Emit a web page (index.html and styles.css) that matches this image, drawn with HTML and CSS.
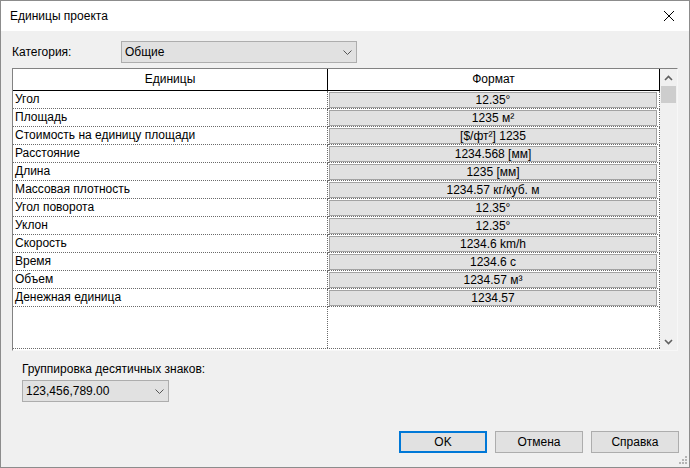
FILE: index.html
```html
<!DOCTYPE html>
<html lang="ru">
<head>
<meta charset="utf-8">
<title>Единицы проекта</title>
<link rel="stylesheet" href="styles.css">
</head>
<body>
<div class="window">
  <div class="titlebar">
    <span class="title">Единицы проекта</span>
    <svg class="close" width="12" height="12" viewBox="0 0 12 12"><path d="M1 1 L11 11 M11 1 L1 11" stroke="#000" stroke-width="1" fill="none"/></svg>
  </div>
  <div class="body">
    <div class="cat-row">
      <span class="cat-label">Категория:</span>
      <div class="combo combo-cat">
        <span>Общие</span>
        <svg class="chev" width="9" height="5" viewBox="0 0 9 5"><path d="M0.5 0.5 L4.5 4.5 L8.5 0.5" stroke="#555" stroke-width="1" fill="none"/></svg>
      </div>
    </div>

    <div class="table">
      <div class="grid">
        <div class="th th1">Единицы</div>
        <div class="th th2">Формат</div>

        <div class="td name">Угол</div>
        <div class="td fmt"><div class="fbtn">12.35°</div></div>

        <div class="td name">Площадь</div>
        <div class="td fmt"><div class="fbtn">1235 м²</div></div>

        <div class="td name">Стоимость на единицу площади</div>
        <div class="td fmt"><div class="fbtn">[$/фт²] 1235</div></div>

        <div class="td name">Расстояние</div>
        <div class="td fmt"><div class="fbtn">1234.568 [мм]</div></div>

        <div class="td name">Длина</div>
        <div class="td fmt"><div class="fbtn">1235 [мм]</div></div>

        <div class="td name">Массовая плотность</div>
        <div class="td fmt"><div class="fbtn">1234.57 кг/куб. м</div></div>

        <div class="td name">Угол поворота</div>
        <div class="td fmt"><div class="fbtn">12.35°</div></div>

        <div class="td name">Уклон</div>
        <div class="td fmt"><div class="fbtn">12.35°</div></div>

        <div class="td name">Скорость</div>
        <div class="td fmt"><div class="fbtn">1234.6 km/h</div></div>

        <div class="td name">Время</div>
        <div class="td fmt"><div class="fbtn">1234.6 с</div></div>

        <div class="td name">Объем</div>
        <div class="td fmt"><div class="fbtn">1234.57 м³</div></div>

        <div class="td name">Денежная единица</div>
        <div class="td fmt"><div class="fbtn">1234.57</div></div>

        <div class="filler f1"></div>
        <div class="filler f2"></div>
      </div>
      <div class="scrollbar">
        <div class="sb-arrow"><svg width="9" height="6" viewBox="0 0 9 6"><path d="M1 5 L4.5 1.5 L8 5" stroke="#606060" stroke-width="1.6" fill="none"/></svg></div>
        <div class="thumb"></div>
        <div class="sb-space"></div>
        <div class="sb-arrow"><svg width="9" height="6" viewBox="0 0 9 6"><path d="M1 1 L4.5 4.5 L8 1" stroke="#606060" stroke-width="1.6" fill="none"/></svg></div>
      </div>
    </div>

    <div class="group">
      <div class="group-label">Группировка десятичных знаков:</div>
      <div class="combo combo-grp">
        <span>123,456,789.00</span>
        <svg class="chev" width="9" height="5" viewBox="0 0 9 5"><path d="M0.5 0.5 L4.5 4.5 L8.5 0.5" stroke="#555" stroke-width="1" fill="none"/></svg>
      </div>
    </div>

    <div class="buttons">
      <div class="btn btn-default">OK</div>
      <div class="btn">Отмена</div>
      <div class="btn">Справка</div>
    </div>
  </div>
  <svg class="grip" width="9" height="9" viewBox="0 0 9 9">
    <rect x="6" y="0" width="2" height="2" fill="#b4b4b4"/>
    <rect x="3" y="3" width="2" height="2" fill="#b4b4b4"/>
    <rect x="6" y="3" width="2" height="2" fill="#b4b4b4"/>
    <rect x="0" y="6" width="2" height="2" fill="#b4b4b4"/>
    <rect x="3" y="6" width="2" height="2" fill="#b4b4b4"/>
    <rect x="6" y="6" width="2" height="2" fill="#b4b4b4"/>
  </svg>
</div>
</body>
</html>
```

FILE: styles.css
```css
* { box-sizing: border-box; }

html, body {
  margin: 0;
  padding: 0;
  background: #f0f0f0;
}

body {
  font-family: "Liberation Sans", Arial, sans-serif;
  font-size: 12px;
  color: #000;
}

.window {
  position: relative;
  width: 690px;
  height: 468px;
  border: 1px solid #8c8c8c;
  background: #f0f0f0;
  display: flex;
  flex-direction: column;
}

.titlebar {
  height: 30px;
  background: #fff;
  display: flex;
  align-items: center;
  justify-content: space-between;
  padding: 0 9px 0 9px;
}

.title {
  font-size: 12px;
  line-height: 15px;
}

.close {
  display: block;
  margin-right: 5px;
}

.body {
  padding: 0 10px 0 11px;
  display: flex;
  flex-direction: column;
}

.cat-row {
  margin-top: 10px;
  height: 22px;
  display: flex;
  align-items: center;
}

.cat-label {
  width: 109px;
  line-height: 15px;
}

.combo {
  height: 22px;
  background: #e1e1e1;
  border: 1px solid #adadad;
  display: flex;
  align-items: center;
  justify-content: space-between;
  padding: 0 4px 0 3px;
  line-height: 15px;
}

.combo-cat {
  width: 236px;
}

.chev {
  display: block;
}

.table {
  margin-top: 5px;
  width: 666px;
  height: 283px;
  border-top: 1px solid #828282;
  border-left: 1px solid #828282;
  border-right: 1px solid #f7f7f7;
  border-bottom: 1px solid #f7f7f7;
  display: flex;
  background: #fff;
}

.grid {
  width: 647px;
  display: grid;
  grid-template-columns: 315px 332px;
  grid-template-rows: 22px repeat(12, 18px) 1fr;
  border-bottom: 1px dotted #6a6a6a;
  margin-bottom: 1px;
}

.th {
  background: #fff;
  border-bottom: 1px solid #000;
  border-right: 1px solid #000;
  display: flex;
  align-items: center;
  justify-content: center;
  line-height: 15px;
}

.td {
  border-bottom: 1px dotted #6a6a6a;
  border-right: 1px dotted #6a6a6a;
  line-height: 15px;
}

.name {
  padding-left: 2px;
  display: flex;
  align-items: center;
}

.fmt {
  padding: 1px 2px 0 1px;
}

.fbtn {
  height: 16px;
  background: #e1e1e1;
  border: 1px solid #a3a3a3;
  display: flex;
  align-items: center;
  justify-content: center;
  line-height: 14px;
  white-space: nowrap;
}

.filler {
  border-right: 1px dotted #6a6a6a;
}

.scrollbar {
  width: 17px;
  background: #f0f0f0;
  display: flex;
  flex-direction: column;
}

.sb-arrow {
  height: 17px;
  display: flex;
  align-items: center;
  justify-content: center;
}

.thumb {
  height: 17px;
  margin: 0 1px;
  background: #cdcdcd;
}

.sb-space {
  flex: 1;
}

.group {
  padding-left: 10px;
  display: flex;
  flex-direction: column;
  align-items: flex-start;
}

.group-label {
  margin-top: 11px;
  line-height: 15px;
}

.combo-grp {
  margin-top: 3px;
  width: 147px;
}

.buttons {
  margin-top: 29px;
  display: flex;
  justify-content: flex-end;
  gap: 8px;
}

.btn {
  width: 88px;
  height: 22px;
  background: #e1e1e1;
  border: 1px solid #adadad;
  display: flex;
  align-items: center;
  justify-content: center;
  line-height: 15px;
}

.btn-default {
  border: 2px solid #0078d7;
}

.grip {
  position: absolute;
  right: 1px;
  bottom: 2px;
}
```
